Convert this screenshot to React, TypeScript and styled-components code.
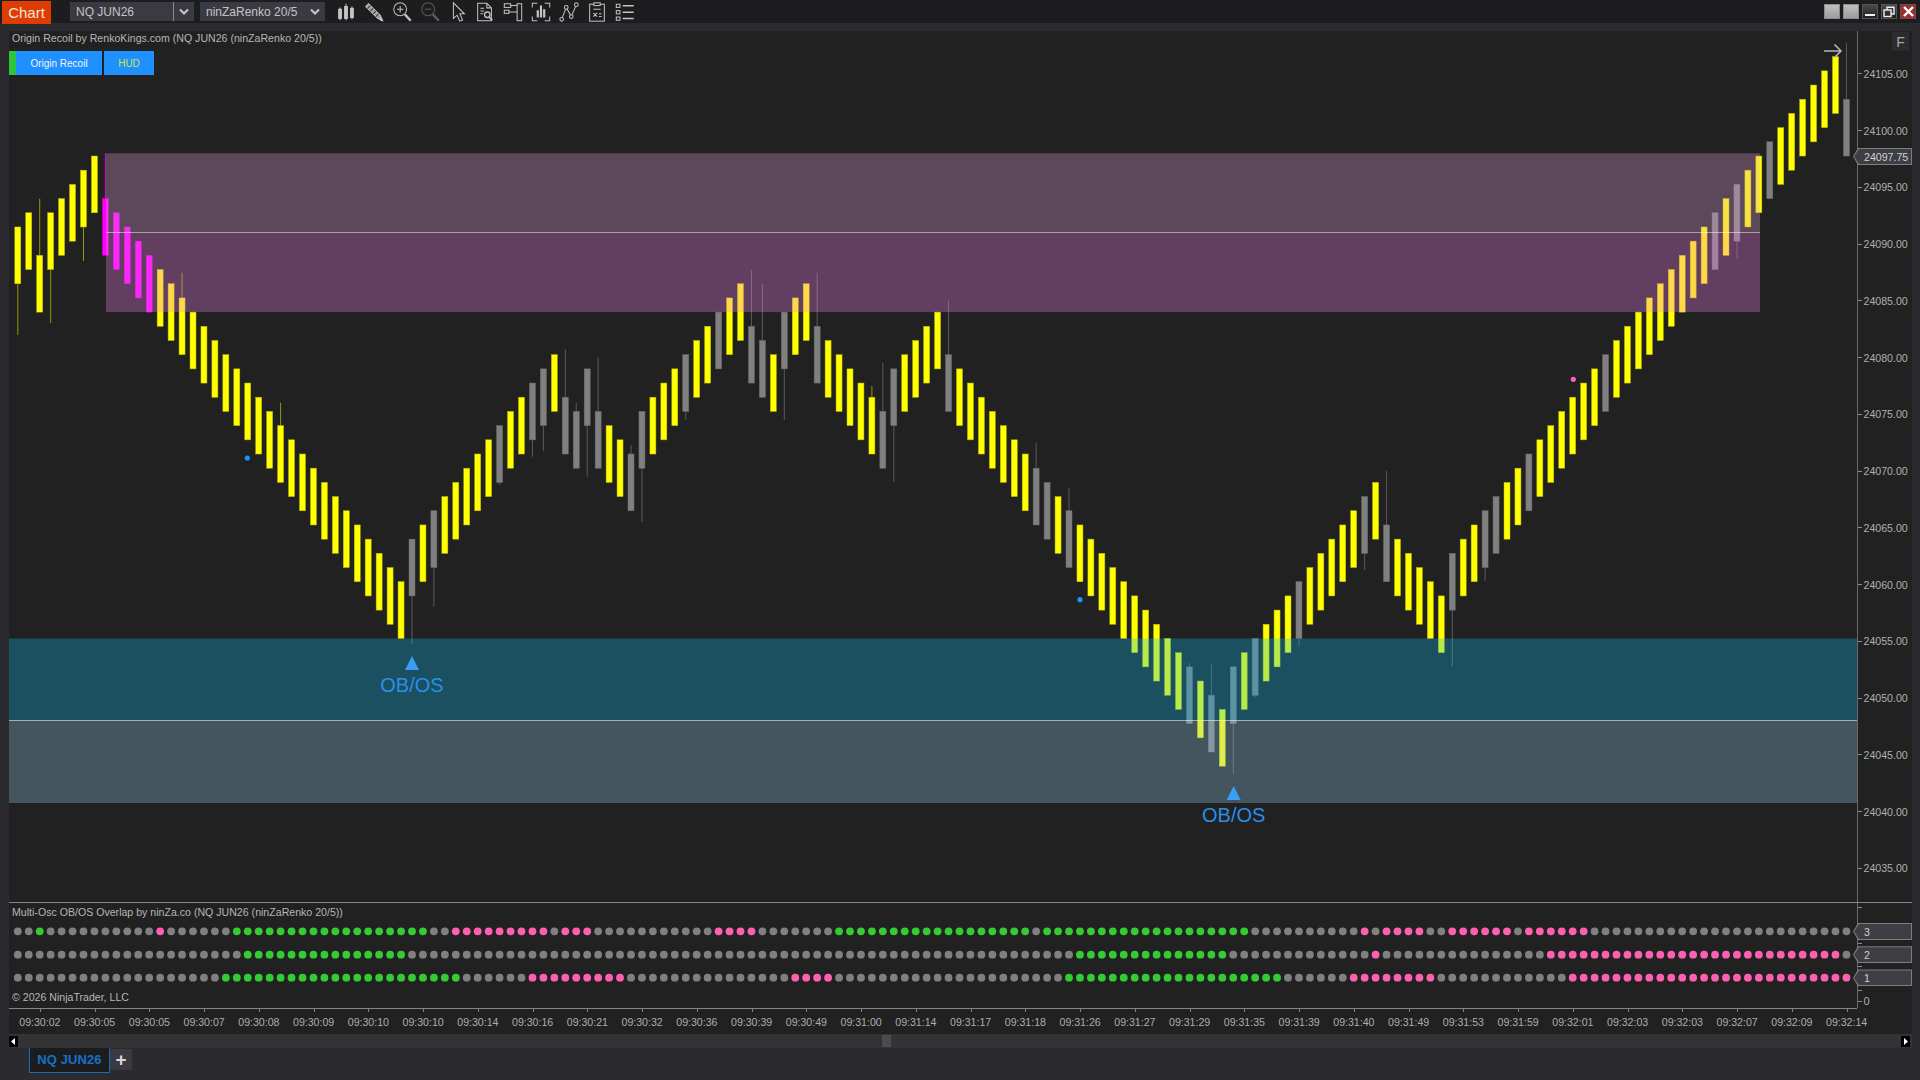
import React from "react";
import styled, { createGlobalStyle } from "styled-components";

const FONT = `"Liberation Sans", Arial, sans-serif`;

const Global = createGlobalStyle`
  html, body { margin: 0; padding: 0; background: #2b2b2f; overflow: hidden; }
  * { box-sizing: border-box; }
`;

const BAR_STEP = 10.95;
const barX = (i: number) => 17.8 + BAR_STEP * i;
const levelY = (l: number) => 156 + 14.19 * l;
const BODY_H = 56.8;

const LEVELS = [
  5, 4, 7, 4, 3, 2, 1, 0, 3, 4, 5, 6, 7, 8, 9, 10, 11, 12, 13, 14, 15, 16, 17, 18, 19, 20, 21, 22, 23, 24, 25, 26, 27, 28, 29, 30,
  27, 26, 25, 24, 23, 22, 21, 20, 19, 18, 17, 16, 15, 14, 17, 18, 15, 18, 19, 20, 21, 18, 17, 16, 15, 14, 13, 12, 11, 10, 9, 12, 13, 14,
  11, 10, 9, 12, 13, 14, 15, 16, 17, 18, 15, 14, 13, 12, 11, 14, 15, 16, 17, 18, 19, 20, 21, 22, 23, 24, 25, 26, 27, 28, 29, 30, 31, 32, 33, 34, 35,
  36, 37, 38, 39, 36, 35, 34, 33, 32, 31, 30, 29, 28, 27, 26, 25, 24, 23, 26, 27, 28, 29, 30, 31, 28, 27, 26, 25, 24, 23, 22, 21, 20, 19, 18, 17, 16, 15,
  14, 13, 12, 11, 10, 9, 8, 7, 6, 5, 4, 3, 2, 1, 0, -1, -2, -3, -4, -5, -6, -7, -4,
];
const GRAY = new Set([36, 38, 44, 47, 48, 50, 51, 52, 53, 56, 57, 61, 64, 67, 68, 70, 73, 79, 80, 85, 93, 94, 96, 107, 109, 111, 113, 117, 123, 125, 131, 134, 135, 138, 145, 155, 157, 160, 167]);
const MAGENTA = new Set([8, 9, 10, 11, 12]);

// [bar index, page y the wick reaches]
const WICKS: [number, number][] = [
  [0, 335], [2, 198.7], [3, 323], [6, 261], [8, 153], [15, 272.7], [24, 402.7], [36, 644], [38, 606.7], [44, 485], [47, 456.7], [48, 451],
  [50, 349], [51, 402.7], [52, 476.7], [53, 357], [56, 445], [57, 522], [61, 420], [67, 270], [68, 284], [70, 420], [73, 272.7], [78, 386],
  [79, 363], [80, 482], [85, 300.7], [93, 442.7], [96, 488], [107, 663], [109, 664], [111, 774], [113, 697], [117, 646.7], [123, 570], [125, 471],
  [131, 666.7], [134, 581], [157, 258.7], [167, 43],
];

type Run = [number, number];
const GREEN = "#33cc33";
const PINK = "#ff5fb0";
const DOT_GRAY = "#808080";

const DOT_ROWS: { y: number; green: Run[]; pink: Run[] }[] = [
  {
    y: 931.3,
    green: [[2, 2], [20, 37], [75, 92], [94, 112]],
    pink: [[13, 13], [40, 48], [50, 52], [64, 67], [123, 123], [125, 128], [131, 136], [138, 143]],
  },
  {
    y: 954.7,
    green: [[21, 35], [97, 110]],
    pink: [[124, 124], [140, 166]],
  },
  {
    y: 977.7,
    green: [[19, 40], [96, 115]],
    pink: [[47, 55], [71, 74], [122, 129], [142, 167]],
  },
];

const inRuns = (runs: Run[], i: number) => runs.some(([a, b]) => i >= a && i <= b);

const PRICES = ["24105.00", "24100.00", "24095.00", "24090.00", "24085.00", "24080.00", "24075.00", "24070.00", "24065.00", "24060.00", "24055.00", "24050.00", "24045.00", "24040.00", "24035.00"];
const TIMES = ["09:30:02", "09:30:05", "09:30:05", "09:30:07", "09:30:08", "09:30:09", "09:30:10", "09:30:10", "09:30:14", "09:30:16", "09:30:21", "09:30:32", "09:30:36", "09:30:39", "09:30:49", "09:31:00", "09:31:14", "09:31:17", "09:31:18", "09:31:26", "09:31:27", "09:31:29", "09:31:35", "09:31:39", "09:31:40", "09:31:49", "09:31:53", "09:31:59", "09:32:01", "09:32:03", "09:32:03", "09:32:07", "09:32:09", "09:32:14"];

const Page = styled.div`
  width: 1920px;
  height: 1080px;
  display: flex;
  flex-direction: column;
  background: #2b2b2f;
  font-family: ${FONT};
  overflow: hidden;
`;

const Toolbar = styled.header`
  height: 23px;
  margin-bottom: 8px;
  flex: none;
  display: flex;
  align-items: center;
  background: #1d1d1f;
  padding-left: 2px;
`;

const ChartBadge = styled.div`
  width: 49px;
  height: 23px;
  margin-top: 1px;
  display: flex;
  align-items: center;
  justify-content: center;
  background: #dd3d02;
  color: #f4e4dc;
  font-size: 15px;
`;

const Select = styled.div<{ $width: number; $left: number }>`
  width: ${(p) => p.$width}px;
  margin-left: ${(p) => p.$left}px;
  height: 19px;
  display: flex;
  align-items: center;
  justify-content: space-between;
  background: #3a3a42;
  color: #c4c4c4;
  font-size: 12px;
  padding-left: 6px;
  flex: none;
`;

const SelectArrow = styled.span<{ $split?: boolean }>`
  width: 21px;
  height: 100%;
  display: flex;
  align-items: center;
  justify-content: center;
  border-left: ${(p) => (p.$split ? "1px solid #8a8a8a" : "none")};
`;

const ToolGroup = styled.div`
  display: flex;
  align-items: center;
  gap: 5.9px;
  margin-left: 10px;
`;

const ToolIcon = styled.svg<{ $dim?: boolean }>`
  width: 22px;
  height: 22px;
  flex: none;
  fill: none;
  stroke: ${(p) => (p.$dim ? "#5e5e5e" : "#c4c4c4")};
  stroke-width: 1.1;
`;

const WindowGroup = styled.div`
  margin-left: auto;
  margin-right: 4px;
  display: flex;
  gap: 3px;
  align-items: center;
`;

const WindowButton = styled.div<{ $kind: "blank" | "dark" | "close" }>`
  width: 16px;
  height: 15px;
  display: flex;
  align-items: center;
  justify-content: center;
  background: ${(p) => (p.$kind === "blank" ? "linear-gradient(#c0c0c0,#9c9c9c)" : p.$kind === "close" ? "#a92a2a" : "linear-gradient(#4a4a4a,#202020)")};
  border: 1px solid ${(p) => (p.$kind === "blank" ? "#8c8c8c" : "#555")};
`;

const Workspace = styled.main`
  margin: 0 8px 0 9px;
  flex: none;
  display: flex;
  flex-direction: column;
`;

const MainPane = styled.section`
  height: 871px;
  display: grid;
  grid-template-columns: 1848px 1fr;
  grid-template-rows: minmax(0, 1fr);
  background: #212121;
`;

const Plot = styled.div`
  position: relative;
  min-width: 0;
  min-height: 0;
  height: 100%;
`;

const ChartSvg = styled.svg`
  display: block;
  width: 100%;
  height: 100%;
`;

const PaneTitle = styled.div<{ $top: number }>`
  position: absolute;
  left: 3px;
  top: ${(p) => p.$top}px;
  line-height: 14px;
  font-size: 10.6px;
  color: #b6b6b6;
  white-space: nowrap;
`;

const ButtonStrip = styled.div`
  position: absolute;
  left: 0;
  top: 20px;
  height: 24px;
  display: flex;
`;

const StatusBar = styled.div`
  width: 7px;
  background: #2dc63a;
`;

const BlueButton = styled.div<{ $width: number; $left?: number; $accent?: boolean }>`
  width: ${(p) => p.$width}px;
  margin-left: ${(p) => p.$left ?? 0}px;
  display: flex;
  align-items: center;
  justify-content: center;
  background: #1e90ff;
  color: ${(p) => (p.$accent ? "#cfe63a" : "#f2f6fa")};
  font-size: 10px;
`;

const PriceAxis = styled.aside`
  position: relative;
  border-left: 1px solid #6a6a6a;
  padding-top: 14.5px;
`;

const PriceRow = styled.div`
  height: 56.75px;
  display: flex;
  align-items: center;
  color: #b0b0b0;
  font-size: 10.6px;
  &::before {
    content: "";
    width: 4px;
    height: 1px;
    margin-right: 1.5px;
    background: #8a8a8a;
  }
`;

const FlagButton = styled.div`
  position: absolute;
  top: 1px;
  right: 3px;
  width: 17px;
  height: 19px;
  display: flex;
  align-items: center;
  justify-content: center;
  background: #2c2c2e;
  color: #a8a8a8;
  font-size: 14px;
`;

const Tag = styled.div<{ $top?: number }>`
  position: absolute;
  left: -5px;
  right: 0;
  top: ${(p) => (p.$top === undefined ? "auto" : `${p.$top}px`)};
  height: 17px;
  padding: 1px;
  background: #7d7d82;
  clip-path: polygon(5px 0, 100% 0, 100% 100%, 5px 100%, 0 50%);
`;

const TagFace = styled.div`
  height: 100%;
  padding-left: 10px;
  display: flex;
  align-items: center;
  background: #3e3e45;
  color: #d0d0d0;
  font-size: 10.6px;
  clip-path: polygon(5px 0, 100% 0, 100% 100%, 5px 100%, 0 50%);
`;

const IndicatorPane = styled.section`
  height: 106px;
  display: grid;
  grid-template-columns: 1848px 1fr;
  grid-template-rows: minmax(0, 1fr);
  background: #212121;
  border-top: 1px solid #858585;
`;

const IndicatorAxis = styled.aside`
  position: relative;
  border-left: 1px solid #6a6a6a;
  padding-top: 17px;
  &::before {
    content: "";
    position: absolute;
    left: 0;
    top: 4px;
    width: 4px;
    height: 1px;
    background: #8a8a8a;
  }
`;

const IndicatorRow = styled.div<{ $tick?: boolean }>`
  position: relative;
  height: 23.2px;
  display: flex;
  align-items: center;
  padding-left: 5.5px;
  color: #b0b0b0;
  font-size: 11px;
  &::before {
    content: "";
    display: ${(p) => (p.$tick ? "block" : "none")};
    position: absolute;
    left: 0;
    top: 0;
    width: 4px;
    height: 1px;
    background: #8a8a8a;
  }
`;

const RowTag = styled(Tag)`
  top: 3px;
`;

const ZeroTick = styled.span`
  position: absolute;
  left: 0;
  top: 11px;
  width: 4px;
  height: 1px;
  background: #8a8a8a;
`;

const TimeAxis = styled.div`
  height: 26px;
  background: #212121;
`;

const TimeTrack = styled.div`
  width: 1848px;
  height: 100%;
  display: flex;
  padding-left: 3.5px;
  border-top: 1px solid #858585;
`;

const TimeCell = styled.div`
  position: relative;
  width: 54.75px;
  flex: none;
  padding-top: 6px;
  text-align: center;
  color: #adadad;
  font-size: 10.6px;
  line-height: 14px;
  &::before {
    content: "";
    position: absolute;
    left: 50%;
    top: 0;
    width: 1px;
    height: 3px;
    background: #858585;
  }
`;

const Scrollbar = styled.div`
  height: 14px;
  display: flex;
  align-items: center;
  justify-content: space-between;
  background: #333335;
  position: relative;
  padding: 0 2px 0 0;
`;

const ScrollEnd = styled.div`
  width: 9px;
  height: 11px;
  background: #000;
  display: flex;
  align-items: center;
  justify-content: center;
`;

const ScrollThumb = styled.div`
  position: absolute;
  left: 873px;
  top: 1px;
  width: 9px;
  height: 12px;
  background: #4c4c4e;
`;

const TabBar = styled.nav`
  height: 32px;
  flex: none;
  display: flex;
  align-items: flex-start;
  margin-left: -9px;
  padding-left: 29px;
  margin-top: -1px;
`;

const Tab = styled.div`
  width: 81px;
  height: 26px;
  display: flex;
  align-items: center;
  justify-content: center;
  padding-bottom: 1px;
  background: #1c1c1e;
  border: 1px solid #1a6db3;
  border-top: none;
  color: #1273c6;
  font-size: 13px;
  font-weight: bold;
  letter-spacing: 0.1px;
`;

const AddTab = styled.div`
  width: 22px;
  height: 21px;
  margin-top: 2px;
  display: flex;
  align-items: center;
  justify-content: center;
  background: #3a3a42;
  color: #d8d8d8;
  font-size: 19px;
  font-weight: bold;
`;

const Chevron = () => (
  <svg width="12" height="8" viewBox="0 0 12 8" fill="none" stroke="#c8c8c8" strokeWidth="2">
    <path d="M2 1.5 L6 5.5 L10 1.5" />
  </svg>
);

const Icon = ({ children, dim }: { children: React.ReactNode; dim?: boolean }) => (
  <ToolIcon viewBox="0 0 24 24" $dim={dim}>
    {children}
  </ToolIcon>
);

const ToolIcons = () => (
  <ToolGroup>
    <Icon>
      <path d="M5.5 7v14M12 3v18M18.5 6v14" />
      <rect x="4" y="9" width="3" height="10" fill="#c4c4c4" />
      <rect x="10.5" y="6" width="3" height="13" fill="#c4c4c4" />
      <rect x="17" y="8" width="3" height="10" fill="#c4c4c4" />
    </Icon>
    <Icon>
      <path d="M3 6 L6 3 L19 16 L21.5 21.5 L16 19 Z" fill="#a2a2a2" />
      <path d="M5 8 L8 5 M8 11 L11 8 M11 14 L14 11 M14 17 L17 14" stroke="#3a3a3a" />
      <path d="M19 19 L21.5 21.5 L18.5 20.5Z" fill="#eee" />
    </Icon>
    <Icon>
      <circle cx="10" cy="9" r="7" />
      <path d="M6.5 9h7M10 5.5v7" />
      <path d="M15 14.5 L21.5 21.5" strokeWidth="2.6" />
    </Icon>
    <Icon dim>
      <circle cx="10" cy="9" r="7" />
      <path d="M6.5 9h7" />
      <path d="M15 14.5 L21.5 21.5" strokeWidth="2.6" />
    </Icon>
    <Icon>
      <path d="M7 2 L7 19 L11 15.5 L14 22 L17 20.8 L14 14 L19 14 Z" />
    </Icon>
    <Icon>
      <path d="M4 2.5 H14 L19 7.5 V21.5 H4 Z M14 2.5 V7.5 H19" />
      <path d="M7 8h4M7 11h4M7 14h3" />
      <circle cx="14.5" cy="15" r="3" strokeWidth="1.4" />
      <path d="M16.5 17.5 L20 21" strokeWidth="1.8" />
    </Icon>
    <Icon>
      <rect x="2.5" y="3" width="7" height="4" />
      <rect x="2.5" y="10" width="5" height="3.5" />
      <path d="M9.5 5h7M7.5 12h9" />
      <rect x="16.5" y="3" width="5" height="18.5" />
    </Icon>
    <Icon>
      <path d="M2.5 7V2.5H8M16 2.5H21.5V7M2.5 17V21.5H8M16 21.5H21.5V17" />
      <path d="M8.5 10v8M12 5v13M15.5 9v9" strokeWidth="2.4" />
    </Icon>
    <Icon>
      <path d="M4 20 L9 7 L14.5 17 L20 4" />
      <circle cx="4" cy="20" r="2" fill="#1d1d1f" />
      <circle cx="9" cy="7" r="2" fill="#1d1d1f" />
      <circle cx="14.5" cy="17" r="2" fill="#1d1d1f" />
      <circle cx="20" cy="4" r="2" fill="#1d1d1f" />
    </Icon>
    <Icon>
      <rect x="4" y="3.5" width="16" height="18.5" />
      <rect x="8.5" y="2" width="7" height="3" fill="#1d1d1f" />
      <path d="M8 9 L16 9 M8 13 L12 17 M12 13 L8 17 M14 14h3M14 17h3" />
    </Icon>
    <Icon>
      <rect x="2.5" y="3.5" width="4" height="3.5" />
      <rect x="2.5" y="10.5" width="4" height="3.5" />
      <rect x="2.5" y="17.5" width="4" height="3.5" />
      <path d="M9.5 5.2h12M9.5 12.2h12M9.5 19.2h12" strokeWidth="1.6" />
    </Icon>
  </ToolGroup>
);

const Candles = () => (
  <g>
    {WICKS.map(([i, y]) => {
      const top = levelY(LEVELS[i]);
      const from = y < top ? top : top + BODY_H;
      const color = GRAY.has(i) ? "#5a5a5a" : MAGENTA.has(i) ? "#d010d0" : "#94940f";
      return <line key={i} x1={barX(i)} x2={barX(i)} y1={from} y2={y} stroke={color} strokeWidth={1} />;
    })}
    {LEVELS.map((l, i) => (
      <rect
        key={i}
        x={barX(i) - 3}
        y={levelY(l)}
        width={6}
        height={BODY_H}
        fill={GRAY.has(i) ? "#808080" : MAGENTA.has(i) ? "#ff00ff" : "#ffff00"}
        stroke={GRAY.has(i) ? "#6c6c6c" : MAGENTA.has(i) ? "#c800c8" : "#b8b800"}
        strokeWidth={0.5}
      />
    ))}
  </g>
);

const Marker = ({ x, y }: { x: number; y: number }) => (
  <g>
    <path d={`M${x} ${y} L${x + 7} ${y + 14} L${x - 7} ${y + 14} Z`} fill="#3a9ff0" />
    <text x={x} y={y + 35.5} textAnchor="middle" fontSize={20} fill="#2a8fe8" fontFamily={FONT}>
      OB/OS
    </text>
  </g>
);

const MainChart = () => (
  <ChartSvg viewBox="9 31 1848 871">
    <Candles />
    <rect x={106} y={153.3} width={1654} height={79.2} fill="rgb(227,163,220)" fillOpacity={0.3} />
    <rect x={106} y={232.5} width={1654} height={79.5} fill="rgb(247,130,243)" fillOpacity={0.3} />
    <line x1={106} x2={1760} y1={232.5} y2={232.5} stroke="#ffffff" strokeOpacity={0.5} strokeWidth={1.2} />
    <rect x={9} y={638.5} width={1848} height={82} fill="rgb(13,190,243)" fillOpacity={0.3} />
    <rect x={9} y={720.5} width={1848} height={82.5} fill="rgb(145,205,240)" fillOpacity={0.3} />
    <line x1={9} x2={1857} y1={720.5} y2={720.5} stroke="#ffffff" strokeOpacity={0.55} strokeWidth={1.2} />
    <circle cx={247.3} cy={458} r={2.6} fill="#1e90ff" />
    <circle cx={1080} cy={599.7} r={2.6} fill="#1e90ff" />
    <circle cx={1573.3} cy={379.3} r={2.6} fill="#ff5fb0" />
    <Marker x={412} y={656} />
    <Marker x={1233.7} y={786} />
    <path d="M1824 51 H1841 M1834.5 44.5 L1841 51 L1834.5 57.5" fill="none" stroke="#b4b4b4" strokeWidth={1.6} />
  </ChartSvg>
);

const DotsChart = () => (
  <ChartSvg viewBox="9 903 1848 105">
    {DOT_ROWS.map((row) =>
      LEVELS.map((_, i) => (
        <circle
          key={`${row.y}-${i}`}
          cx={barX(i)}
          cy={row.y}
          r={3.9}
          fill={inRuns(row.green, i) ? GREEN : inRuns(row.pink, i) ? PINK : DOT_GRAY}
        />
      ))
    )}
  </ChartSvg>
);

export default function App() {
  return (
    <Page>
      <Global />
      <Toolbar>
        <ChartBadge>Chart</ChartBadge>
        <Select $width={124} $left={19}>
          NQ JUN26
          <SelectArrow $split>
            <Chevron />
          </SelectArrow>
        </Select>
        <Select $width={125} $left={6}>
          ninZaRenko 20/5
          <SelectArrow>
            <Chevron />
          </SelectArrow>
        </Select>
        <ToolIcons />
        <WindowGroup>
          <WindowButton $kind="blank" />
          <WindowButton $kind="blank" />
          <WindowButton $kind="dark">
            <svg width="10" height="10" viewBox="0 0 10 10">
              <rect x="0" y="7" width="10" height="2" fill="#eee" />
            </svg>
          </WindowButton>
          <WindowButton $kind="dark">
            <svg width="12" height="12" viewBox="0 0 12 12" fill="none" stroke="#eee" strokeWidth="1.4">
              <rect x="1" y="4" width="7" height="6.5" />
              <path d="M4 4V1.2h7V8H8" />
            </svg>
          </WindowButton>
          <WindowButton $kind="close">
            <svg width="11" height="11" viewBox="0 0 11 11" stroke="#fff" strokeWidth="2.4">
              <path d="M1 1 L10 10 M10 1 L1 10" />
            </svg>
          </WindowButton>
        </WindowGroup>
      </Toolbar>
      <Workspace>
        <MainPane>
          <Plot>
            <MainChart />
            <PaneTitle $top={0}>Origin Recoil by RenkoKings.com (NQ JUN26 (ninZaRenko 20/5))</PaneTitle>
            <ButtonStrip>
              <StatusBar />
              <BlueButton $width={86}>Origin Recoil</BlueButton>
              <BlueButton $width={50} $left={2} $accent>
                HUD
              </BlueButton>
            </ButtonStrip>
          </Plot>
          <PriceAxis>
            {PRICES.map((p) => (
              <PriceRow key={p}>{p}</PriceRow>
            ))}
            <FlagButton>F</FlagButton>
            <Tag $top={117}>
              <TagFace>24097.75</TagFace>
            </Tag>
          </PriceAxis>
        </MainPane>
        <IndicatorPane>
          <Plot>
            <DotsChart />
            <PaneTitle $top={2}>Multi-Osc OB/OS Overlap by ninZa.co (NQ JUN26 (ninZaRenko 20/5))</PaneTitle>
            <PaneTitle $top={87}>© 2026 NinjaTrader, LLC</PaneTitle>
          </Plot>
          <IndicatorAxis>
            {["3", "2", "1"].map((v, idx) => (
              <IndicatorRow key={v} $tick={idx > 0}>
                <RowTag>
                  <TagFace>{v}</TagFace>
                </RowTag>
              </IndicatorRow>
            ))}
            <IndicatorRow $tick>
              <ZeroTick />0
            </IndicatorRow>
          </IndicatorAxis>
        </IndicatorPane>
        <TimeAxis>
          <TimeTrack>
            {TIMES.map((t, i) => (
              <TimeCell key={i}>{t}</TimeCell>
            ))}
          </TimeTrack>
        </TimeAxis>
        <Scrollbar>
          <ScrollEnd>
            <svg width="5" height="7" viewBox="0 0 5 7">
              <path d="M4 0 V7 L0 3.5 Z" fill="#fff" />
            </svg>
          </ScrollEnd>
          <ScrollThumb />
          <ScrollEnd>
            <svg width="5" height="7" viewBox="0 0 5 7">
              <path d="M1 0 V7 L5 3.5 Z" fill="#fff" />
            </svg>
          </ScrollEnd>
        </Scrollbar>
        <TabBar>
          <Tab>NQ JUN26</Tab>
          <AddTab>+</AddTab>
        </TabBar>
      </Workspace>
    </Page>
  );
}
